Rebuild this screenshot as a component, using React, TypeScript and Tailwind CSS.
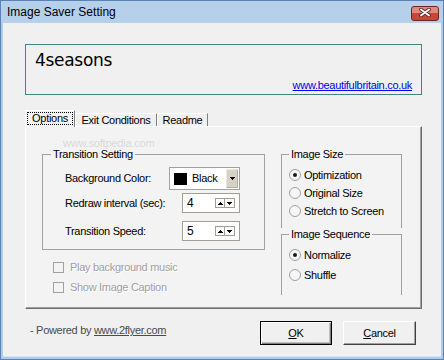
import React from 'react'

const font = "font-['Liberation_Sans','Arial',sans-serif]"

function UpArrow() {
  return (
    <svg width="5" height="3" viewBox="0 0 5 3" shapeRendering="crispEdges">
      <path d="M2 0h1v1h1v1h1v1H0V2h1V1h1z" fill="#000" />
    </svg>
  )
}

function DownArrow() {
  return (
    <svg width="5" height="3" viewBox="0 0 5 3" shapeRendering="crispEdges">
      <path d="M0 0h5v1H4v1H3v1H2V2H1V1H0z" fill="#000" />
    </svg>
  )
}

function Spin({ value }: { value: string }) {
  return (
    <div className="w-[58px] h-[20px] border border-[#a39d92] bg-white flex items-center justify-between pl-[4px] pr-[4px]">
      <span className="text-black text-[12px] leading-none">{value}</span>
      <div className="flex h-[10px] border border-[#a39d92]">
        <div className="w-[9px] flex items-center justify-center border-r border-[#a39d92]">
          <UpArrow />
        </div>
        <div className="w-[9px] flex items-center justify-center">
          <DownArrow />
        </div>
      </div>
    </div>
  )
}

function Radio({ label, checked }: { label: string; checked?: boolean }) {
  return (
    <div className="flex items-center gap-[3px] h-full">
      <div className="w-[12px] h-[12px] rounded-full border border-[#a0a0a0] bg-[#f6f6f6] flex items-center justify-center">
        {checked && <div className="w-[4px] h-[4px] rounded-full bg-[#1a1a1a]" />}
      </div>
      <span className="text-black">{label}</span>
    </div>
  )
}

function Check({ label }: { label: string }) {
  return (
    <div className="h-[20px] flex items-center gap-[6px]">
      <div className="w-[11px] h-[11px] border border-[#a0a0a0] bg-[#f3f3f3]" />
      <span className="text-[#a0a0a0] [text-shadow:1px_1px_0_#ffffff]">{label}</span>
    </div>
  )
}

export default function App() {
  return (
    <div className={`w-[444px] h-[360px] flex flex-col bg-[#aecbea] border border-[#5a82b4] ${font} text-[11px] tracking-[-0.3px] text-black`}>
      {/* title bar */}
      <div className="h-[22px] flex items-center justify-between pl-[6px] pr-[4px] bg-[#b6cfea]">
        <span className="text-[12px] tracking-normal text-black">Image Saver Setting</span>
        <div className="w-[28px] h-[15px] mt-[2px] rounded-[3px] border border-[#6e2522] bg-[#c8463a] flex flex-col">
          <div className="h-[6px] bg-[#dc8a7e] rounded-t-[2px]" />
          <div className="flex-1 flex items-start justify-center mt-[-5px]">
            <svg width="12" height="9" viewBox="0 0 12 9">
              <path d="M2 1.5l8 6M10 1.5l-8 6" stroke="#5e1f1f" strokeWidth="3.6" strokeLinecap="round" />
              <path d="M2 1.5l8 6M10 1.5l-8 6" stroke="#ffffff" strokeWidth="2" strokeLinecap="round" />
            </svg>
          </div>
        </div>
      </div>

      {/* client area */}
      <div className="relative flex-1 mx-[2px] mb-[2px] bg-[#f0f0f0] border-b border-[#d8e4f0] flex flex-col pl-[22px] pt-[21px]">
        <div className="w-[397px] h-[51px] border border-[#3f8585] flex flex-col pl-[9px] pr-[9px]">
          <div className="font-['DejaVu_Sans',sans-serif] text-[17px] font-medium leading-[20px] mt-[5px]">4seasons</div>
          <div className="flex justify-end mt-[9px]">
            <span className="text-[#0000ff] underline leading-[13px]">www.beautifulbritain.co.uk</span>
          </div>
        </div>

        {/* tabs */}
        <div className="mt-[15px] h-[16px] flex items-end">
          <div className="relative z-10 w-[50px] h-[17px] mb-[-1px] bg-[#f3f3f3] border-t border-l border-white border-r border-r-[#808080] flex justify-center pt-[1px]">
            <span className="h-[13px] px-[4px] leading-[11px] border border-dotted border-black">Options</span>
          </div>
          <div className="w-[82px] h-[13px] border-t border-l border-white border-r border-r-[#808080] flex justify-center leading-[12px]">
            Exit Conditions
          </div>
          <div className="w-[51px] h-[13px] border-t border-l border-white border-r border-r-[#808080] flex justify-center leading-[12px]">
            Readme
          </div>
        </div>

        {/* panel */}
        <div className="w-[397px] h-[183px] bg-[#f3f3f3] border-t border-l border-white border-r border-b border-r-[#6e6e6e] border-b-[#6e6e6e] shadow-[inset_-1px_-1px_0_#a0a0a0] flex pl-[16px] pt-[21px]">
          <div className="w-[223px] flex flex-col">
            <fieldset className="h-[102px] border border-[#a0a0a0] px-[8px] pt-[6px]">
              <legend className="px-[2px] leading-[13px]">Transition Setting</legend>
              <div className="flex flex-col pl-[14px] pr-[16px]">
                <div className="h-[23px] flex items-center justify-between">
                  <span>Background Color:</span>
                  <div className="w-[71px] h-[23px] border border-[#a0a0a0] bg-white flex items-center pl-[4px] pr-[1px]">
                    <div className="w-[13px] h-[12px] bg-black" />
                    <span className="ml-[5px] text-[11px]">Black</span>
                    <div className="ml-auto w-[12px] h-[19px] bg-[#d6d2c6] border border-[#ece9e2] border-r-[#b0aca0] border-b-[#b0aca0] flex items-center justify-center">
                      <DownArrow />
                    </div>
                  </div>
                </div>
                <div className="mt-[3px] h-[20px] flex items-center justify-between">
                  <span>Redraw interval (sec):</span>
                  <Spin value="4" />
                </div>
                <div className="mt-[8px] h-[20px] flex items-center justify-between">
                  <span>Transition Speed:</span>
                  <Spin value="5" />
                </div>
              </div>
            </fieldset>
            <div className="mt-[7px] pl-[11px] flex flex-col">
              <Check label="Play background music" />
              <Check label="Show Image Caption" />
            </div>
          </div>

          <div className="ml-[16px] w-[121px] flex flex-col">
            <fieldset className="h-[80px] border border-b-0 border-[#a0a0a0] px-[7px] pt-[5px]">
              <legend className="px-[2px] leading-[13px]">Image Size</legend>
              <div className="flex flex-col">
                <div className="h-[18px]"><Radio label="Optimization" checked /></div>
                <div className="h-[18px]"><Radio label="Original Size" /></div>
                <div className="h-[18px]"><Radio label="Stretch to Screen" /></div>
              </div>
            </fieldset>
            <fieldset className="h-[67px] border border-b-0 border-[#a0a0a0] px-[7px] pt-[4px]">
              <legend className="px-[2px] leading-[13px]">Image Sequence</legend>
              <div className="flex flex-col">
                <div className="h-[20px]"><Radio label="Normalize" checked /></div>
                <div className="h-[20px]"><Radio label="Shuffle" /></div>
              </div>
            </fieldset>
          </div>
        </div>

        {/* footer */}
        <div className="mt-[12px] w-[391px] flex items-center justify-between">
          <span className="ml-[5px] mt-[-5px] text-[#4a4a4a]">
            - Powered by <span className="underline">www.2flyer.com</span>
          </span>
          <div className="flex gap-[11px]">
            <div className="w-[72px] h-[24px] border border-black shadow-[inset_1px_1px_0_#ffffff,inset_-1px_-1px_0_#808080,inset_-2px_-2px_0_#c0c0c0] flex items-center justify-center">
              <span><span className="underline">O</span>K</span>
            </div>
            <div className="w-[73px] h-[24px] border border-white border-r-[#404040] border-b-[#404040] shadow-[inset_-1px_-1px_0_#a0a0a0] flex items-center justify-center">
              <span><span className="underline">C</span>ancel</span>
            </div>
          </div>
        </div>

        {/* watermark */}
        <div className="pointer-events-none absolute left-[60px] top-[112px] text-[11px] text-[#dadada] tracking-[-0.2px]">
          www.softpedia.com
        </div>
      </div>
    </div>
  )
}
